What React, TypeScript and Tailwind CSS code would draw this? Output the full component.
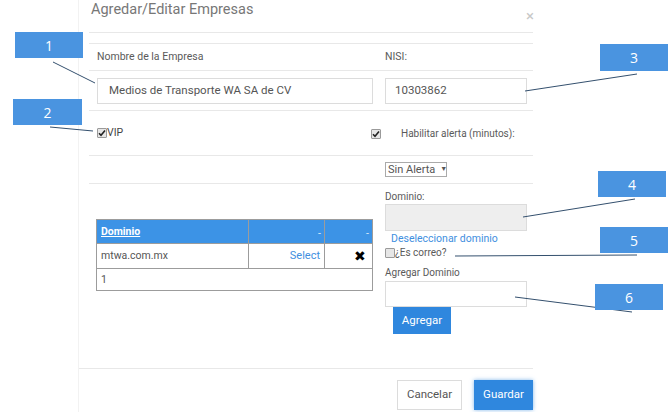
import React from "react";

function Check({ checked }: { checked: boolean }) {
  return (
    <span className="inline-flex h-[10px] w-[10px] items-center justify-center border border-[#9a9a9a] bg-[#e6e6e6] rounded-[1px]">
      {checked && (
        <svg width="8" height="8" viewBox="0 0 8 8">
          <path d="M1 4.2 L3 6.2 L7 1.5" stroke="#222" strokeWidth="1.6" fill="none" />
        </svg>
      )}
    </span>
  );
}

function Tag({ n, className }: { n: string; className: string }) {
  return (
    <div
      className={`absolute flex items-center justify-center bg-[#4a94e0] text-white text-[14px] font-['Open_Sans',sans-serif] ${className}`}
    >
      {n}
    </div>
  );
}

export default function App() {
  return (
    <div className="relative w-[671px] h-[412px] overflow-hidden bg-white font-['Roboto',sans-serif] text-[#5a5a5a]">
      <div className="ml-[78px] w-[467px] h-[412px] border-l border-[#f2f2f2] flex flex-col">
        {/* header */}
        <div className="ml-[10px] mr-[12px] h-[33px] border-b border-[#e8e8e8] flex items-start justify-between pt-0 pl-[2px]">
          <span className="text-[14.5px] text-[#777] leading-[20px]">Agredar/Editar Empresas</span>
          <span className="text-[15px] text-[#c8c8c8] leading-[20px] mt-[6px] mr-[-1px]">×</span>
        </div>
        {/* body */}
        <div className="pl-[10px] pr-[12px] pt-[10px] flex-1">
          <div className="h-[28px] border-t border-b border-[#e8e8e8] flex items-center text-[10.5px] text-[#5a5a5a]">
            <div className="w-[296px] pl-[8px]">Nombre de la Empresa</div>
            <div>NISI:</div>
          </div>
          <div className="h-[40px] border-b border-[#e8e8e8] flex items-start pt-[7px]">
            <div className="w-[296px] pl-[8px]">
              <div className="w-[276px] h-[26px] border border-[#dcdcdc] flex items-center pl-[11px] text-[11.5px] text-[#555]">
                Medios de Transporte WA SA de CV
              </div>
            </div>
            <div className="w-[142px] h-[26px] border border-[#dcdcdc] flex items-center pl-[9px] text-[11.5px] text-[#555]">
              10303862
            </div>
          </div>
          <div className="h-[45px] border-b border-[#e8e8e8] flex items-start pt-[14px]">
            <div className="w-[282px] pl-[8px] flex items-center text-[10.5px] text-[#444]">
              <Check checked />
              <span>VIP</span>
            </div>
            <div className="flex items-center pt-[1px] text-[10px] text-[#5a5a5a]">
              <Check checked />
              <span className="ml-[20px]">Habilitar alerta (minutos):</span>
            </div>
          </div>
          <div className="h-[28px] border-b border-[#e8e8e8] flex items-center pl-[296px]">
            <div className="h-[15px] w-[62px] border border-[#aaa] flex items-center pl-[2px] text-[11px] text-[#555] leading-none whitespace-nowrap">
              Sin Alerta <span className="ml-[5px] text-[7px]">▼</span>
            </div>
          </div>
          <div className="flex items-start">
            <div className="w-[296px] pl-[7px] pt-[35px]">
              <div className="w-[277px] border border-[#9c9c9c] text-[10.5px]">
                <div className="flex h-[23px] bg-[#3c93e6] text-white">
                  <div className="w-[152px] border-r border-[#9c9c9c] flex items-center pl-[4px] font-bold underline">Dominio</div>
                  <div className="w-[76px] border-r border-[#9c9c9c] flex items-end justify-end pr-[3px] pb-[1px] text-[#dbe9f8]">-</div>
                  <div className="flex-1 flex items-end justify-end pr-[3px] pb-[1px] text-[#dbe9f8]">-</div>
                </div>
                <div className="flex h-[26px] border-t border-b border-[#9c9c9c]">
                  <div className="w-[152px] border-r border-[#9c9c9c] flex items-center pl-[4px] text-[10.5px] text-[#555]">mtwa.com.mx</div>
                  <div className="w-[76px] border-r border-[#9c9c9c] flex items-center justify-end pr-[4px] text-[11px] text-[#3f8fe0]">Select</div>
                  <div className="flex-1 flex items-center justify-end pr-[6px] text-[14px] text-black">✖</div>
                </div>
                <div className="h-[21px] flex items-center pl-[4px] text-[10.5px] text-[#555]">1</div>
              </div>
            </div>
            <div className="pt-[6px] flex flex-col">
              <div className="text-[10px] leading-[14px] text-[#5a5a5a]">Dominio:</div>
              <div className="w-[142px] h-[27px] border border-[#dcdcdc] bg-[#eeeeee]"></div>
              <div className="pl-[6px] mt-[1px] text-[10.5px] leading-[13px] text-[#3f8fe0]">Deseleccionar dominio</div>
              <div className="mt-[2px] flex items-center text-[10px] leading-[12px] text-[#5a5a5a]">
                <Check checked={false} />
                <span>¿Es correo?</span>
              </div>
              <div className="mt-[7px] text-[10px] leading-[14px] text-[#5a5a5a]">Agregar Dominio</div>
              <div className="mt-[1px] w-[142px] h-[26px] border border-[#dcdcdc] bg-white"></div>
              <div className="ml-[8px] w-[58px] h-[27px] bg-[#2f87de] text-white text-[11.5px] flex items-center justify-center">
                Agregar
              </div>
            </div>
          </div>
        </div>
        {/* footer */}
        <div className="mr-[12px] h-[44px] border-t border-[#e8e8e8] flex items-start justify-end pt-[11px] gap-[12px]">
          <div className="w-[65px] h-[30px] border border-[#dcdcdc] flex items-center justify-center text-[11.5px] text-[#555]">
            Cancelar
          </div>
          <div className="w-[59px] h-[30px] bg-[#2f87de] shadow-[0_0_4px_rgba(47,135,222,0.6)] flex items-center justify-center text-[11.5px] text-white">
            Guardar
          </div>
        </div>
      </div>

      {/* annotations */}
      <svg className="absolute left-0 top-0" width="671" height="412">
        <g stroke="#34506e" strokeWidth="1">
          <line x1="53" y1="62" x2="95" y2="83" />
          <line x1="50" y1="127" x2="93" y2="131" />
          <line x1="525" y1="91" x2="637" y2="74" />
          <line x1="523" y1="217" x2="635" y2="199" />
          <line x1="455" y1="256" x2="637" y2="255" />
          <line x1="515" y1="297" x2="632" y2="312" />
        </g>
      </svg>
      <Tag n="1" className="left-[15px] top-[32px] w-[68px] h-[26px]" />
      <Tag n="2" className="left-[13px] top-[99px] w-[69px] h-[26px]" />
      <Tag n="3" className="left-[600px] top-[44px] w-[68px] h-[27px]" />
      <Tag n="4" className="left-[598px] top-[171px] w-[68px] h-[26px]" />
      <Tag n="5" className="left-[600px] top-[227px] w-[68px] h-[26px]" />
      <Tag n="6" className="left-[595px] top-[284px] w-[68px] h-[26px]" />
    </div>
  );
}
